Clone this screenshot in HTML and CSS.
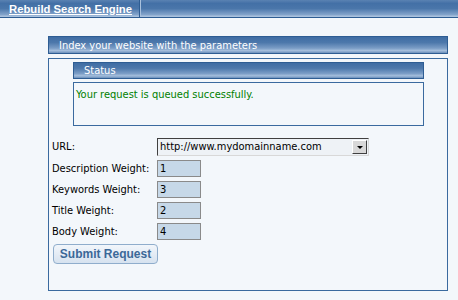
FILE: index.html
```html
<!DOCTYPE html>
<html lang="en">
<head>
    <meta charset="UTF-8">
    <title>Rebuild Search Engine</title>
    <link rel="stylesheet" href="styles.css">
</head>
<body>
    <header class="topbar">
        <a href="#" class="tab-title">Rebuild Search Engine</a>
        <span class="tab-sep"></span>
    </header>

    <main class="panel">
        <div class="bar panel-head">Index your website with the parameters</div>
        <div class="panel-box">
            <section class="status">
                <div class="bar status-head">Status</div>
                <div class="status-body">Your request is queued successfully.</div>
            </section>

            <form class="params">
                <div class="row url-row">
                    <label>URL:</label>
                    <div class="select">
                        <span class="select-value">http://www.mydomainname.com</span>
                        <span class="select-btn"><span class="arrow"></span></span>
                    </div>
                </div>
                <div class="row">
                    <label>Description Weight:</label>
                    <input type="text" value="1">
                </div>
                <div class="row">
                    <label>Keywords Weight:</label>
                    <input type="text" value="3">
                </div>
                <div class="row">
                    <label>Title Weight:</label>
                    <input type="text" value="2">
                </div>
                <div class="row">
                    <label>Body Weight:</label>
                    <input type="text" value="4">
                </div>
                <button type="button" class="submit">Submit Request</button>
            </form>
        </div>
    </main>
</body>
</html>
```

FILE: styles.css
```css
* {
    margin: 0;
    padding: 0;
    box-sizing: border-box;
}

body {
    font-family: 'DejaVu Sans Condensed', 'DejaVu Sans', sans-serif;
    font-size: 11px;
    background: #f3f7fb;
    color: #000;
    width: 458px;
    height: 300px;
    overflow: hidden;
}

/* shared blue gradient strip */
.bar {
    background: linear-gradient(#3f6da4 0%, #4d78ab 35%, #7b9dc6 70%, #a4bedc 85%, #6b8fbb 100%);
    color: #fff;
}

/* Top tab bar */
.topbar {
    display: flex;
    align-items: center;
    height: 18px;
    background: linear-gradient(#5a82b2 0%, #4370a6 20%, #4a76aa 50%, #86a6cc 88%, #a9c1dd 94%);
    border-bottom: 1px solid #2e5d93;
}

.tab-title {
    color: #fff;
    font-family: 'Liberation Sans', Arial, sans-serif;
    font-weight: bold;
    font-size: 11.3px;
    text-decoration: underline;
    white-space: nowrap;
    padding-left: 9px;
    width: 139px;
}

.tab-sep {
    width: 2px;
    height: 17px;
    background: linear-gradient(90deg, #2e5d93 50%, #a9c1dd 50%);
}

/* Main panel */
.panel {
    margin: 18px 0 0 48px;
    width: 400px;
}

.panel-head {
    height: 18px;
    line-height: 17px;
    padding-left: 10px;
    border: 1px solid #2e5d93;
}

.panel-box {
    margin-top: 4px;
    height: 233px;
    border: 1px solid #3a6a9f;
    padding: 3px 3px 0;
}

.status {
    margin-left: 21px;
    width: 351px;
}

.status-head {
    height: 17px;
    line-height: 16px;
    padding-left: 10px;
    border: 1px solid #2e5d93;
}

.status-body {
    margin-top: 3px;
    height: 44px;
    border: 1px solid #3a6a9f;
    padding: 5px 2px;
    color: #008000;
}

/* Form */
.params {
    margin-top: 12px;
    display: flex;
    flex-direction: column;
    gap: 4px;
}

.row {
    display: flex;
    align-items: center;
    height: 17px;
}

.url-row {
    margin-bottom: 1px;
}

.row label {
    width: 105px;
}

.row input {
    width: 44px;
    height: 17px;
    border: 1px solid #8a8a8a;
    background: #c6d8e8;
    font: inherit;
    padding: 0 2px;
}

.select {
    display: flex;
    align-items: center;
    width: 212px;
    height: 18px;
    border: 1px solid;
    border-color: #404040 #d8d8d8 #d8d8d8 #404040;
    background: #eef2f6;
}

.select-value {
    flex: 1;
    padding-left: 2px;
}

.select-btn {
    display: flex;
    align-items: center;
    justify-content: center;
    width: 15px;
    height: 14px;
    margin-right: 1px;
    background: #d8d8d8;
    border: 1px solid;
    border-color: #fff #404040 #404040 #fff;
}

.arrow {
    width: 0;
    height: 0;
    margin-top: 2px;
    border-left: 3px solid transparent;
    border-right: 3px solid transparent;
    border-top: 3px solid #000;
}

.submit {
    align-self: flex-start;
    margin-left: 1px;
    width: 105px;
    height: 20px;
    font-family: 'Liberation Sans', Arial, sans-serif;
    font-weight: bold;
    font-size: 12px;
    color: #3b6898;
    background: linear-gradient(#f2f6fb, #d6e2ef);
    border: 1px solid #8fadcc;
    border-radius: 4px;
}
```
